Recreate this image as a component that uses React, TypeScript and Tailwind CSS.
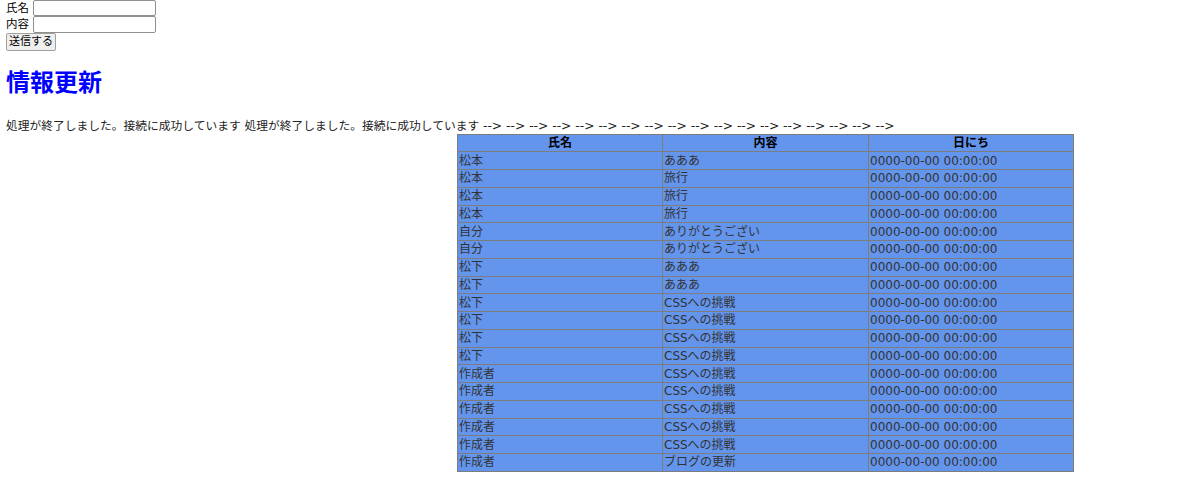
import React from "react";

const rows: [string, string][] = [
  ["松本", "あああ"],
  ["松本", "旅行"],
  ["松本", "旅行"],
  ["松本", "旅行"],
  ["自分", "ありがとうござい"],
  ["自分", "ありがとうござい"],
  ["松下", "あああ"],
  ["松下", "あああ"],
  ["松下", "CSSへの挑戦"],
  ["松下", "CSSへの挑戦"],
  ["松下", "CSSへの挑戦"],
  ["松下", "CSSへの挑戦"],
  ["作成者", "CSSへの挑戦"],
  ["作成者", "CSSへの挑戦"],
  ["作成者", "CSSへの挑戦"],
  ["作成者", "CSSへの挑戦"],
  ["作成者", "CSSへの挑戦"],
  ["作成者", "ブログの更新"],
];

const cell = "whitespace-nowrap border border-[#7d7d7d] px-[1px] py-0 leading-[16px] text-[#333]";
const head = "border border-[#7d7d7d] px-[1px] py-0 text-center text-[12px] font-bold leading-[16px] text-black";

export default function App() {
  const arrows = Array.from({ length: 18 }, () => "-->").join(" ");
  return (
    <div
      className="min-h-[478px] w-[1200px] overflow-hidden bg-white pl-[6px] text-[12px] text-black"
      style={{ fontFamily: '"DejaVu Sans", "Noto Sans CJK JP", sans-serif' }}
    >
      <div className="flex h-[16px] items-center">
        <span className="w-[27px] text-[11.5px] leading-[16px]">氏名</span>
        <span className="h-[16px] w-[123px] rounded-[2px] border border-[#8f8f8f] bg-white" />
      </div>
      <div className="flex h-[16.5px] items-center">
        <span className="w-[27px] text-[11.5px] leading-[16px]">内容</span>
        <span className="h-[16.5px] w-[123px] rounded-[2px] border border-[#8f8f8f] bg-white" />
      </div>
      <div className="mt-[0.5px]">
        <button className="flex h-[18px] w-[50px] items-center justify-center rounded-[2px] border border-[#a0a0a0] bg-[#efefef] text-[11px] leading-[16px] text-black">
          送信する
        </button>
      </div>
      <h1 className="mt-[16.5px] text-[24px] font-bold leading-[30px] text-[#0000ff]">情報更新</h1>
      <p className="mt-[20px] whitespace-nowrap leading-[16px] text-[#222]">
        <span className="text-[11.75px]">処理が終了しました。接続に成功しています</span>{" "}
        <span className="text-[11.75px]">処理が終了しました。接続に成功しています</span>{" "}
        <span className="text-[12.3px]">{arrows}</span>
      </p>
      <table className="ml-[451px] w-[616px] table-fixed border-collapse border border-b-[#555] border-l-[#8a8a8a] border-r-[#555] border-t-[#8a8a8a] bg-[#6495ed]">
        <colgroup>
          <col className="w-[205px]" />
          <col className="w-[206px]" />
          <col className="w-[205px]" />
        </colgroup>
        <thead>
          <tr className="h-[17.75px]">
            <th className={head}>氏名</th>
            <th className={head}>内容</th>
            <th className={head}>日にち</th>
          </tr>
        </thead>
        <tbody>
          {rows.map((r, i) => (
            <tr key={i} className="h-[17.75px]">
              <td className={cell}>{r[0]}</td>
              <td className={cell}>{r[1]}</td>
              <td className={cell}>0000-00-00 00:00:00</td>
            </tr>
          ))}
        </tbody>
      </table>
    </div>
  );
}
